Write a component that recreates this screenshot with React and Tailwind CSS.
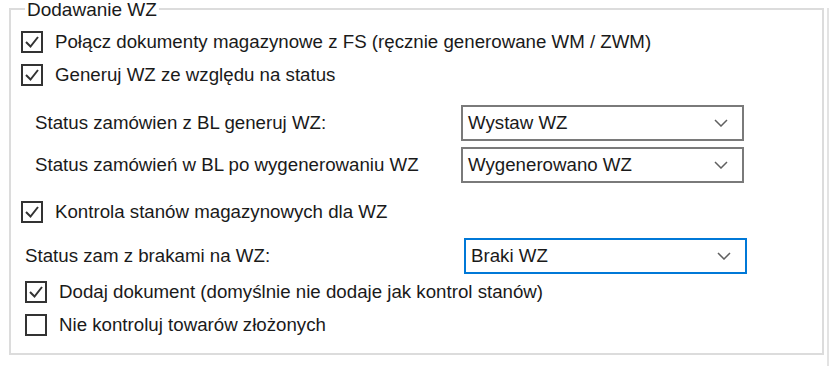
import React from "react";

function Check({ checked }) {
  return (
    <div className="w-[22px] h-[22px] border-2 border-[#333333] bg-white flex items-center justify-center shrink-0">
      {checked && (
        <svg width="18" height="18" viewBox="0 0 18 18">
          <polyline points="3,9 7.5,13.5 15,4" fill="none" stroke="#333333" strokeWidth="2" />
        </svg>
      )}
    </div>
  );
}

function Combo({ value, focused }) {
  return (
    <div
      className={
        "w-[283px] h-[36px] flex items-center justify-between pl-[5px] pr-[14px] bg-white border-2 shrink-0 " +
        (focused ? "border-[#0078d7]" : "border-[#7a7a7a]")
      }
    >
      <span className="text-[18.7px] text-[#1a1a1a]">{value}</span>
      <svg width="14" height="8" viewBox="0 0 14 8">
        <polyline points="1,1 7,7 13,1" fill="none" stroke="#606060" strokeWidth="1.5" />
      </svg>
    </div>
  );
}

export default function App() {
  return (
    <div
      className="w-[832px] h-[366px] bg-white overflow-hidden"
      style={{ fontFamily: '"Liberation Sans", Arial, sans-serif' }}
    >
      <div className="w-[829px] h-[363px] border-r-2 border-b-2 border-[#e3e3e3]">
        <div className="ml-[9px] mt-[8px] w-[815px] h-[347px] border-2 border-[#dcdcdc] relative text-[#1a1a1a] text-[18.7px] leading-none">
          <span className="absolute left-[14px] top-[-10px] bg-white px-[2px] text-[19px] leading-[20px]">
            Dodawanie WZ
          </span>
          <div className="flex flex-col pl-[10px] pt-[21px]">
            <div className="flex items-center h-[22px] gap-[12px]">
              <Check checked />
              <span>Połącz dokumenty magazynowe z FS (ręcznie generowane WM / ZWM)</span>
            </div>
            <div className="flex items-center h-[22px] gap-[12px] mt-[11px]">
              <Check checked />
              <span>Generuj WZ ze względu na status</span>
            </div>
            <div className="flex items-center h-[36px] mt-[19px]">
              <span className="w-[440px] pl-[14px] shrink-0">Status zamówien z BL generuj WZ:</span>
              <Combo value="Wystaw WZ" />
            </div>
            <div className="flex items-center h-[36px] mt-[6px]">
              <span className="w-[440px] pl-[14px] shrink-0">Status zamówień w BL po wygenerowaniu WZ</span>
              <Combo value="Wygenerowano WZ" />
            </div>
            <div className="flex items-center h-[22px] gap-[12px] mt-[18px]">
              <Check checked />
              <span>Kontrola stanów magazynowych dla WZ</span>
            </div>
            <div className="flex items-center h-[36px] mt-[15px]">
              <span className="w-[443px] pl-[4px] shrink-0">Status zam z brakami na WZ:</span>
              <Combo value="Braki WZ" focused />
            </div>
            <div className="flex items-center h-[22px] gap-[12px] mt-[7px] pl-[4px]">
              <Check checked />
              <span>Dodaj dokument (domyślnie nie dodaje jak kontrol stanów)</span>
            </div>
            <div className="flex items-center h-[22px] gap-[12px] mt-[11px] pl-[4px]">
              <Check />
              <span>Nie kontroluj towarów złożonych</span>
            </div>
          </div>
        </div>
      </div>
    </div>
  );
}
